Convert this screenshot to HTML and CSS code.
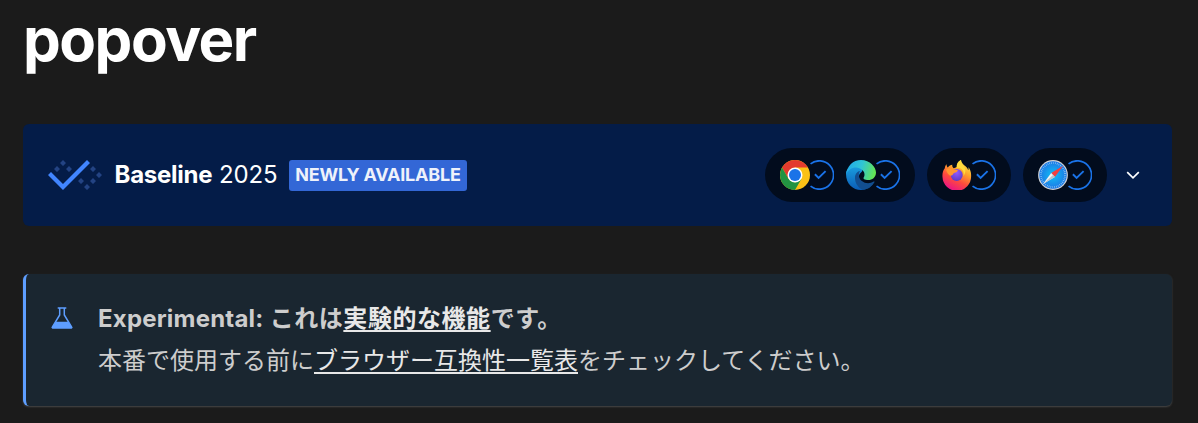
FILE: index.html
```html
<!DOCTYPE html>
<html lang="ja">
<head>
<meta charset="utf-8">
<title>popover</title>
<link rel="stylesheet" href="styles.css">
</head>
<body>
<svg width="0" height="0" class="defs" aria-hidden="true">
  <defs>
    <linearGradient id="edgeTop" x1="0" y1="0.3" x2="1" y2="0.5"><stop offset="0" stop-color="#20a8e8"/><stop offset=".5" stop-color="#30c5d5"/><stop offset="1" stop-color="#65e650"/></linearGradient>
    <linearGradient id="edgeMid" x1="0" y1="0" x2="0" y2="1"><stop offset="0" stop-color="#1aa0e0"/><stop offset="1" stop-color="#0b5cb5"/></linearGradient>
    <linearGradient id="foxBody" x1=".8" y1="0" x2=".3" y2="1"><stop offset="0" stop-color="#fff44f"/><stop offset=".35" stop-color="#ffa52a"/><stop offset=".65" stop-color="#ff4a3d"/><stop offset="1" stop-color="#e8108c"/></linearGradient>
    <radialGradient id="foxGlobe" cx=".5" cy=".3" r=".7"><stop offset="0" stop-color="#9059ff"/><stop offset="1" stop-color="#5d3bc5"/></radialGradient>
    <radialGradient id="safariDial"><stop offset="0" stop-color="#10c0f5"/><stop offset="1" stop-color="#1e78e5"/></radialGradient>
    <symbol id="status" viewBox="0 0 24 30">
      <path d="M.5 3.9A14.2 14.2 0 1 1 .5 26.1" fill="none" stroke="#1a73e8" stroke-width="1.7"/>
      <path d="M4.9 14.3l3.7 3.6 7-6.8" fill="none" stroke="#1a73e8" stroke-width="1.9"/>
    </symbol>
  </defs>
</svg>
<h1 class="title">popover</h1>
<section class="baseline">
  <svg class="baseline-icon" viewBox="0 0 540 300">
    <path class="dots" d="M150 0l30 30-30 30-30-30zM90 60l30 30-30 30-30-30zM210 60l30 30-30 30-30-30zM330 180l30 30-30 30-30-30zM390 240l30 30-30 30-30-30zM450 180l30 30-30 30-30-30zM510 120l30 30-30 30-30-30zM450 60l30 30-30 30-30-30z"/>
    <path class="tick" d="M150 300L0 150l30-30 120 120L390 0l30 30z"/>
  </svg>
  <h2 class="baseline-title"><strong>Baseline</strong> 2025</h2>
  <span class="pill">Newly available</span>
  <div class="browsers">
    <div class="engine">
      <span class="browser">
        <svg class="logo" viewBox="0 0 30 30">
          <circle cx="15" cy="15" r="15" fill="#fbc116"/>
          <path d="M2.01 7.5A15 15 0 0 1 27.99 7.5H15L8.5 18.75z" fill="#e33b2e"/>
          <path d="M2.01 7.5A15 15 0 0 0 15 30l6.5-11.25L15 22.5l-6.5-3.75z" fill="#229342"/>
          <circle cx="15" cy="15" r="7.5" fill="#fff"/>
          <circle cx="15" cy="15" r="6" fill="#1a73e8"/>
        </svg>
        <svg class="status"><use href="#status"/></svg>
      </span>
      <span class="browser">
        <svg class="logo" viewBox="0 0 30 30">
          <path d="M0 14C0 8 6 4.500 12 6c5 1.200 5.500 5 3 6.500-4 3-2 10 4 12 4 0 6-1 8.500-2A15 15 0 0 1 15 30C7 30 0 24 0 14z" fill="url(#edgeMid)"/>
          <path d="M9 18c0-4 2-6.500 5-7-2 3-1.500 7 1.500 9.700 4 3.300 8.500 3 12 .9 1-.5 1.300 0 .8.800A15 15 0 0 1 17 29.800C12 28 9 23 9 18z" fill="#124e90"/>
          <path d="M0 14.500C1 6 7 0 15 0c9 0 15 7 15 12.500 0 5-4 7.500-7.500 7.500-4 0-6-1.300-4.500-3C20 13 16.500 8 10.500 7.500 6 7.300 1.500 10 0 14.500z" fill="url(#edgeTop)"/>
        </svg>
        <svg class="status"><use href="#status"/></svg>
      </span>
    </div>
    <div class="engine">
      <span class="browser">
        <svg class="logo" viewBox="0 0 30 30">
          <path d="M2.800 8.200C3 6.500 3.500 5.300 4.600 4.200c0 1.700.5 2.600 1.200 3.200C7.300 5.800 8.600 5.100 10.300 4.800c-.3 1.600.3 2.800 1.500 3.400L15 7c0-3.500 1.200-5.500 4-7 .4 3 2.300 4.500 4.500 6.300 1.600 1.300 2.300 2.700 2.700 4 .5-1 .4-2.200.1-3.300 2 2.500 3 5.500 2.800 9A14.300 14.300 0 0 1 .5 17C.2 13.500 1 10.500 2.800 8.200z" fill="url(#foxBody)"/>
          <circle cx="14.700" cy="15" r="6" fill="url(#foxGlobe)"/>
          <path d="M4 9.500c2-1.400 4.700-1.500 7.500.1l4.300.4c0 1.700-1.700 2.400-3.700 3-1.200.6-.8 2-2.600 2.600C7 16 5 13 4 9.500z" fill="#ff9630"/>
          <path d="M14.500 8c5-1 8 3 7 8 3-4 2-8 0-9.800C19.500 4.500 19 2 19 0c-3.300 1.500-4.500 4-4.500 8z" fill="#ffdc3c"/>
        </svg>
        <svg class="status"><use href="#status"/></svg>
      </span>
    </div>
    <div class="engine">
      <span class="browser">
        <svg class="logo" viewBox="0 0 30 30">
          <circle cx="15" cy="15" r="14.900" fill="#d0d4d8"/>
          <circle cx="15" cy="15" r="13.700" fill="url(#safariDial)"/>
          <circle cx="15" cy="15" r="12" fill="none" stroke="#b9e2fa" stroke-width="1.700" stroke-dasharray=".5 1.380"/>
          <path d="M25.200 5.800L13.200 13 16.800 17z" fill="#f2403f"/>
          <path d="M4.800 24.200L13.200 13 16.800 17z" fill="#f0f3f5"/>
          <path d="M4.800 24.200L15 15l1.800 2z" fill="#b9c3ca"/>
        </svg>
        <svg class="status"><use href="#status"/></svg>
      </span>
    </div>
  </div>
  <svg class="chevron" viewBox="0 0 14 8"><path d="M1.200 1.200L7 6.800l5.800-5.600"/></svg>
</section>
<aside class="note">
  <svg class="flask" viewBox="0 0 22 22">
    <path d="M6.700 1h8.600M8.700 1v7L1.500 19.800q-.4 1 .7 1h17.600q1.100 0 .7-1L13.300 8V1" fill="none" stroke="#5e9eff" stroke-width="1.500"/>
    <path d="M5 14.800h12l4.500 5.600q0 1-1 1h-19q-1 0-1-1z" fill="#5e9eff"/>
  </svg>
  <div class="note-text">
    <p class="lead"><span class="label">Experimental:</span> <span class="kana">これは<a>実験的な機能</a>です。</span></p>
    <p>本番で使用する前に<a>ブラウザー互換性一覧表</a>をチェックしてください。</p>
  </div>
</aside>
</body>
</html>
```
FILE: styles.css
```css
* { box-sizing: border-box; }
body {
  margin: 0;
  padding: 3px 26px 0 23px;
  height: 423px;
  overflow: hidden;
  background: #1b1b1b;
  color: #fff;
  font-family: Inter, "Noto Sans CJK JP", sans-serif;
  font-size: 24px;
}
.defs { display: block; height: 0; }
svg { flex: none; }
.title {
  margin: 0 0 49px;
  height: 72px;
  font-size: 60px;
  line-height: 72px;
  font-weight: 700;
  letter-spacing: -1.5px;
}
.baseline {
  display: flex;
  align-items: center;
  height: 102px;
  padding: 0 32px 0 24.5px;
  border-radius: 6px;
  background: #041c48;
}
.baseline-icon { width: 54px; height: 30px; }
.dots { fill: #234383; }
.tick { fill: #4185ff; }
.baseline-title {
  width: 163px;
  margin: 0 11.5px 0 13px;
  font-size: 24px;
  font-weight: 400;
  line-height: 36px;
  letter-spacing: -.1px;
  white-space: nowrap;
}
.baseline-title strong { font-weight: 700; letter-spacing: -.25px; }
.pill {
  width: 178px;
  height: 31px;
  border-radius: 3px;
  background: #3367d6;
  color: #eef2fb;
  font-size: 18px;
  font-weight: 700;
  line-height: 30px;
  letter-spacing: -.2px;
  text-align: center;
  text-transform: uppercase;
  white-space: nowrap;
}
.browsers { display: flex; gap: 12px; margin: 0 19px 0 auto; }
.engine {
  display: flex;
  align-items: center;
  gap: 12px;
  height: 54px;
  padding: 0 15px;
  border-radius: 27px;
  background: #020c1d;
}
.browser { display: flex; }
.logo { width: 30px; height: 30px; }
.status { width: 24px; height: 30px; }
.chevron { width: 14px; height: 8px; fill: none; stroke: #fff; stroke-width: 1.7; }
.note {
  display: flex;
  height: 132px;
  margin-top: 48px;
  padding: 24px 24px 0;
  border-left: 3px solid #5e9eff;
  border-radius: 6px;
  background: #1a2630;
  box-shadow: 0 1px 2px #484848;
  color: #cdcdcd;
}
.flask { width: 22px; height: 22px; margin: 9px 25px 0 1px; }
.note-text p { margin: 0; height: 42px; line-height: 41px; white-space: nowrap; }
.note-text .lead { font-weight: 700; line-height: 42px; }
.label { display: inline-block; width: 166px; letter-spacing: .2px; }
.kana { letter-spacing: .55px; }
.note a {
  color: #e8e8e8;
  text-decoration: underline;
  text-decoration-thickness: 2px;
  text-underline-offset: 3px;
}
```
